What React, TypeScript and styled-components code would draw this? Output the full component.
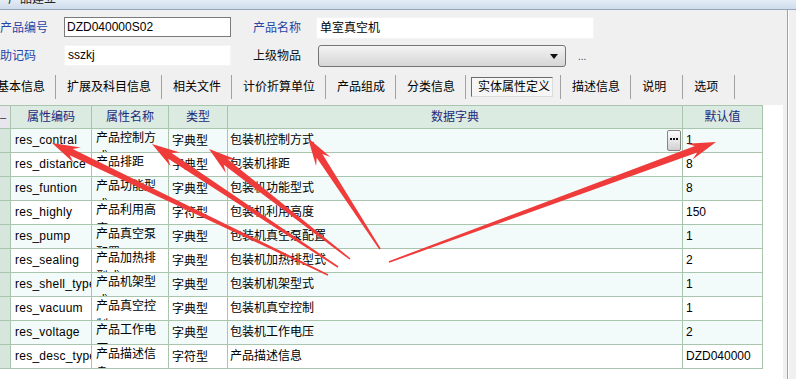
import React from "react";
import styled, { createGlobalStyle } from "styled-components";

const GlobalStyle = createGlobalStyle`
  html, body {
    margin: 0;
    padding: 0;
    background: #f0f0f0;
  }
  body {
    font-family: "Liberation Sans", "Noto Sans CJK SC", sans-serif;
    font-size: 12px;
    color: #000;
  }
`;

const Page = styled.div`
  position: relative;
  width: 796px;
  height: 379px;
  overflow: hidden;
  display: flex;
  flex-direction: column;
  background: #f0f0f0;
`;

const TitleBar = styled.div`
  flex-shrink: 0;
  height: 9px;
  overflow: hidden;
  border-bottom: 1px solid #97a7bb;
  background: linear-gradient(#e3ecf6, #cfdcec);
`;

const TitleText = styled.div`
  margin-top: -8px;
  padding-left: 8px;
  line-height: 14px;
  color: #222;
`;

const Body = styled.div`
  flex: 1;
  display: flex;
  min-height: 0;
`;

const Main = styled.div`
  width: 783px;
  display: flex;
  flex-direction: column;
`;

const Edge = styled.div`
  margin-left: 4px;
  width: 1px;
  background: #a0a0a0;
  border-right: 1px solid #fff;
`;

/* form */
const Form = styled.div`
  padding-top: 7px;
  display: flex;
  flex-direction: column;
  gap: 6px;
`;

const FormRow = styled.div`
  display: flex;
  align-items: flex-start;
`;

const Label = styled.div<{ $w: number; $gap?: number; $blue?: boolean }>`
  width: ${(p) => p.$w}px;
  margin-left: ${(p) => p.$gap ?? 0}px;
  line-height: 22px;
  color: ${(p) => (p.$blue ? "#2645a6" : "#111")};
  white-space: nowrap;
`;

const TextBox = styled.div<{ $w: number; $h: number; $framed?: boolean }>`
  box-sizing: border-box;
  width: ${(p) => p.$w}px;
  height: ${(p) => p.$h}px;
  padding-left: ${(p) => (p.$framed ? 2 : 3)}px;
  background: #fff;
  border: 1px solid ${(p) => (p.$framed ? "#7a7a7a" : "#f4f4f4")};
  line-height: ${(p) => p.$h - 2}px;
  white-space: nowrap;
`;

const Select = styled.div`
  position: relative;
  box-sizing: border-box;
  width: 248px;
  height: 22px;
  border: 1px solid #747474;
  border-radius: 3px;
  background: linear-gradient(#f4f4f4, #e4e4e4 50%, #d6d6d6);
  &::after {
    content: "";
    position: absolute;
    right: 7px;
    top: 8px;
    border-left: 4px solid transparent;
    border-right: 4px solid transparent;
    border-top: 5px solid #111;
  }
`;

const Dots = styled.div`
  margin-left: 12px;
  padding-top: 6px;
  font-size: 10px;
  line-height: 12px;
  color: #444;
`;

/* tabs */
const Tabs = styled.div`
  margin-top: 8px;
  margin-left: -14px;
  height: 24px;
  display: flex;
`;

const Tab = styled.div<{ $active?: boolean }>`
  box-sizing: border-box;
  min-width: 52px;
  height: 24px;
  padding: ${(p) => (p.$active ? "2px 7px 2px 5px" : "0 10px 0 11px")};
  border-right: 1px solid #a2a2a2;
  line-height: 24px;
  white-space: nowrap;
`;

const ActiveBox = styled.div`
  box-sizing: border-box;
  height: 20px;
  padding: 0 2px 0 6px;
  border: 1px solid;
  border-color: #6a6a6a #dcdcdc #dcdcdc #6a6a6a;
  background: #f6f6f6;
  line-height: 18px;
`;

/* grid */
const GridArea = styled.div`
  margin-top: 6px;
  flex: 1;
  background: #fff;
`;

const COLS = "11px 81px 77px 59px 455px 80px";

const HeadRow = styled.div`
  display: grid;
  grid-template-columns: ${COLS};
  width: 763px;
  height: 24px;
  box-sizing: border-box;
  border-top: 1px solid #a9c5ad;
  border-bottom: 1px solid #a9c5ad;
  background: #dcebe2;
`;

const HeadCell = styled.div`
  border-right: 1px solid #a9c5ad;
  text-align: center;
  line-height: 22px;
  color: #1b2a7c;
  white-space: nowrap;
  overflow: hidden;
`;

const Indicator = styled.div<{ $head?: boolean }>`
  border-right: 1px solid #a9c5ad;
  background: ${(p) => (p.$head ? "#e6e6ec" : "#d6e6dd")};
  line-height: 22px;
  font-size: 11px;
  color: #333;
  overflow: hidden;
`;

const Row = styled.div<{ $alt: boolean }>`
  display: grid;
  grid-template-columns: ${COLS};
  width: 763px;
  height: 24px;
  box-sizing: border-box;
  border-bottom: 1px solid #a9c5ad;
  background: ${(p) => (p.$alt ? "#f2fbfa" : "#fff")};
`;

const Cell = styled.div<{ $pl?: number; $pt?: number; $pr?: number }>`
  box-sizing: border-box;
  padding: ${(p) => p.$pt ?? 0}px ${(p) => p.$pr ?? 3}px 0 ${(p) => p.$pl ?? 4}px;
  border-right: 1px solid #a9c5ad;
  line-height: 23px;
  white-space: nowrap;
  overflow: hidden;
`;

const CodeCell = styled(Cell)`
  letter-spacing: 0.25px;
`;

const WrapCell = styled(Cell)<{ $lh?: number }>`
  white-space: normal;
  word-break: break-all;
  line-height: ${(p) => p.$lh ?? 19}px;
`;

const DictCell = styled(Cell)`
  display: flex;
  align-items: center;
  justify-content: space-between;
  padding-right: 1px;
`;

const MoreButton = styled.div`
  box-sizing: border-box;
  width: 14px;
  height: 21px;
  padding-top: 3px;
  border: 1px solid #858585;
  border-radius: 2px;
  background: linear-gradient(#fdfdfd, #e6e6e6 55%, #cfcfcf);
  display: flex;
  justify-content: center;
  gap: 1px;
`;

const Dot = styled.span`
  width: 2px;
  height: 2px;
  margin-top: 4px;
  background: #111;
`;

const Overlay = styled.svg`
  position: absolute;
  left: 0;
  top: 0;
  pointer-events: none;
`;

type Attr = {
  code: string;
  name: string;
  type: string;
  dict: string;
  value: string;
};

const rows: Attr[] = [
  { code: "res_contral", name: "产品控制方式", type: "字典型", dict: "包装机控制方式", value: "1" },
  { code: "res_distance", name: "产品排距", type: "字典型", dict: "包装机排距", value: "8" },
  { code: "res_funtion", name: "产品功能型式", type: "字典型", dict: "包装机功能型式", value: "8" },
  { code: "res_highly", name: "产品利用高度", type: "字符型", dict: "包装机利用高度", value: "150" },
  { code: "res_pump", name: "产品真空泵配置", type: "字典型", dict: "包装机真空泵配置", value: "1" },
  { code: "res_sealing", name: "产品加热排型式", type: "字典型", dict: "包装机加热排型式", value: "2" },
  { code: "res_shell_type", name: "产品机架型式", type: "字典型", dict: "包装机机架型式", value: "1" },
  { code: "res_vacuum", name: "产品真空控制", type: "字典型", dict: "包装机真空控制", value: "1" },
  { code: "res_voltage", name: "产品工作电压", type: "字典型", dict: "包装机工作电压", value: "2" },
  { code: "res_desc_type", name: "产品描述信息", type: "字符型", dict: "产品描述信息", value: "DZD040000S02" },
];

const tabs = ["基本信息", "扩展及科目信息", "相关文件", "计价折算单位", "产品组成", "分类信息", "实体属性定义", "描述信息", "说明", "选项"];
const activeTab = "实体属性定义";

// annotation arrows: [tipX, tipY, tailX, tailY]
const arrows: [number, number, number, number][] = [
  [52, 143, 328, 275],
  [152, 144, 338, 267],
  [209, 149, 350, 259],
  [308, 138, 380, 249],
  [716, 142, 389, 262],
];

function arrowPoints(tx: number, ty: number, sx: number, sy: number) {
  const L = 28;
  const W = 8.5;
  const N = 3.4;
  const T = 0.8;
  const dx = tx - sx;
  const dy = ty - sy;
  const len = Math.hypot(dx, dy);
  const ux = dx / len;
  const uy = dy / len;
  const nx = -uy;
  const ny = ux;
  const neckX = tx - ux * L * 0.76;
  const neckY = ty - uy * L * 0.76;
  const barbX = tx - ux * L;
  const barbY = ty - uy * L;
  const pts = [
    [sx + nx * T, sy + ny * T],
    [neckX + nx * N, neckY + ny * N],
    [barbX + nx * W, barbY + ny * W],
    [tx, ty],
    [barbX - nx * W, barbY - ny * W],
    [neckX - nx * N, neckY - ny * N],
    [sx - nx * T, sy - ny * T],
  ];
  return pts.map((p) => `${p[0].toFixed(1)},${p[1].toFixed(1)}`).join(" ");
}

export default function App() {
  return (
    <>
      <GlobalStyle />
      <Page>
        <TitleBar>
          <TitleText>产品建立</TitleText>
        </TitleBar>
        <Body>
          <Main>
            <Form>
              <FormRow>
                <Label $w={64} $blue>产品编号</Label>
                <TextBox $w={167} $h={20} $framed>DZD040000S02</TextBox>
                <Label $w={63} $gap={22} $blue>产品名称</Label>
                <TextBox $w={278} $h={22}>单室真空机</TextBox>
              </FormRow>
              <FormRow>
                <Label $w={64} $blue>助记码</Label>
                <TextBox $w={167} $h={21}>sszkj</TextBox>
                <Label $w={65} $gap={22}>上级物品</Label>
                <Select />
                <Dots>...</Dots>
              </FormRow>
            </Form>

            <Tabs>
              {tabs.map((t) =>
                t === activeTab ? (
                  <Tab key={t} $active>
                    <ActiveBox>{t}</ActiveBox>
                  </Tab>
                ) : (
                  <Tab key={t}>{t}</Tab>
                )
              )}
            </Tabs>

            <GridArea>
              <HeadRow>
                <Indicator $head>–</Indicator>
                <HeadCell>属性编码</HeadCell>
                <HeadCell>属性名称</HeadCell>
                <HeadCell>类型</HeadCell>
                <HeadCell>数据字典</HeadCell>
                <HeadCell>默认值</HeadCell>
              </HeadRow>
              {rows.map((r, i) => (
                <Row key={r.code} $alt={i % 2 === 0}>
                  <Indicator />
                  <CodeCell>{r.code}</CodeCell>
                  <WrapCell>{r.name}</WrapCell>
                  <Cell $pl={3} $pt={1}>{r.type}</Cell>
                  {i === 0 ? (
                    <DictCell $pl={2}>
                      <span>{r.dict}</span>
                      <MoreButton>
                        <Dot />
                        <Dot />
                        <Dot />
                      </MoreButton>
                    </DictCell>
                  ) : (
                    <Cell $pl={2}>{r.dict}</Cell>
                  )}
                  <WrapCell $pl={3} $pr={6} $pt={2} $lh={18}>{r.value}</WrapCell>
                </Row>
              ))}
            </GridArea>
          </Main>
          <Edge />
        </Body>

        <Overlay width={796} height={379} viewBox="0 0 796 379">
          {arrows.map(([tx, ty, sx, sy], i) => (
            <polygon key={i} points={arrowPoints(tx, ty, sx, sy)} fill="#f03b3b" />
          ))}
        </Overlay>
      </Page>
    </>
  );
}
